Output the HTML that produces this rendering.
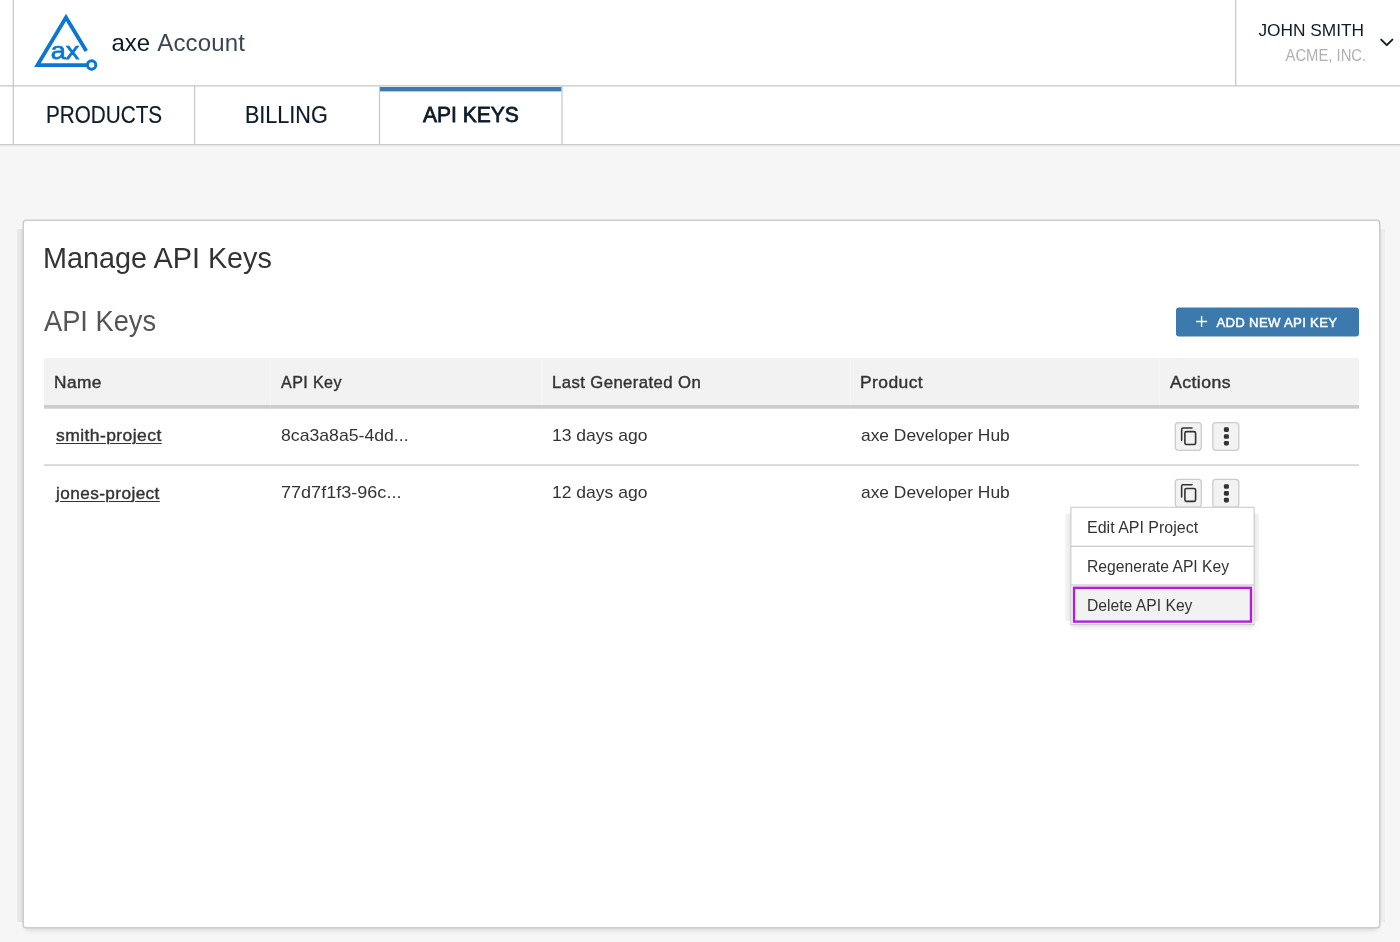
<!DOCTYPE html>
<html lang="en">
<head>
<meta charset="utf-8">
<title>axe Account - API Keys</title>
<style>
*{box-sizing:border-box;margin:0;padding:0}
html,body{width:1400px;height:942px;overflow:hidden}
html{background:#f6f6f6}
body{font-family:"Liberation Sans",Arial,sans-serif;color:#333;position:relative;will-change:transform}
.abs{position:absolute}
.t{position:absolute;white-space:nowrap;transform-origin:0 50%}
.white{left:0;top:0;width:1400px;height:145px;background:#fff}
.brand{left:111.4px;top:28.5px;font-size:24px;line-height:28px;color:#0d1b2a}
.user1{right:36px;top:20px;font-size:17.3px;line-height:20px;color:#0d1b2a;transform-origin:100% 50%}
.user2{right:34px;top:46px;font-size:16px;line-height:20px;color:#b0b0b0;transform-origin:100% 50%}
.tab{top:100px;font-size:23px;line-height:30px;color:#0d1b2a;-webkit-text-stroke:.2px #0d1b2a}
.tab.act{font-weight:400;font-size:22px;-webkit-text-stroke:.8px #0d1b2a}
.strip{left:17px;top:229px;width:1368px;height:693px;background:linear-gradient(90deg,#ececec 0,#e2e2e2 5px,#e2e2e2 1362px,#ececec 1364px,#efefef 100%)}
.panel{left:24px;top:221px;width:1355px;height:706px;background:#fff;border-radius:2px;box-shadow:0 0 0 1.5px #ccc,0 5px 5px -2px rgba(0,0,0,.14)}
h1{left:43px;top:240px;font-size:29px;line-height:36px;font-weight:400;color:#333}
h2{left:44px;top:303px;font-size:29px;line-height:36px;font-weight:400;color:#555}
.btn{left:1176px;top:307.5px;width:183px;height:29px;background:#3c7aae;border-radius:3px}
.btnt{left:1216.4px;top:312.7px;color:#fff;font-size:13.2px;letter-spacing:.3px;font-weight:400;-webkit-text-stroke:.45px #fff;line-height:20px}
.thead{left:44px;top:358px;width:1315px;height:47px;background:#f2f2f2}
.th{top:372.8px;font-size:16.8px;font-weight:400;-webkit-text-stroke:.4px #333;letter-spacing:.4px;line-height:20px;color:#333}
.td{font-size:17px;line-height:20px;color:#333}
.link{font-weight:400;font-size:16.6px;-webkit-text-stroke:.4px #333;letter-spacing:.4px;text-decoration:underline;text-decoration-thickness:1.3px;text-underline-offset:1.5px}
.menu{left:1071px;top:508px;width:183px;height:116px;background:#fff;box-shadow:0 4px 4px 0 rgba(0,0,0,.10)}
.mstrip{left:1065px;top:514px;width:194px;height:107px;background:linear-gradient(90deg,#f4f4f4 0,#efefef 5px,#efefef 190px,#f4f4f4 100%)}
.mi{left:1087px;font-size:16px;line-height:20px;color:#333}
</style>
</head>
<body>
<div class="abs white"></div>
<svg class="abs" style="left:30px;top:8px" width="72" height="68" viewBox="30 8 72 68">
 <path d="M86.3 51.05 L66 17.5 L37.46 65.1 L87.4 65.1" fill="none" stroke="#0b77d2" stroke-width="3.8" stroke-linejoin="miter" stroke-miterlimit="10"/>
 <circle cx="91.6" cy="65" r="4.2" fill="#fff" stroke="#0b77d2" stroke-width="3"/>
 <text x="50.8" y="59.3" font-family="Liberation Sans, Arial, sans-serif" font-weight="400" font-size="23.4" textLength="28.6" lengthAdjust="spacingAndGlyphs" fill="#0b77d2" stroke="#0b77d2" stroke-width="0.75">ax</text>
</svg>
<div class="t brand">axe <span style="color:#3b4652;letter-spacing:.12px;margin-left:.6px">Account</span></div>
<div class="t user1">JOHN SMITH</div>
<div class="t user2" style="transform:scaleX(.925)">ACME, INC.</div>
<svg class="abs" style="left:1378px;top:36px" width="18" height="14" viewBox="0 0 18 14"><path d="M3.2 3.6 L8.8 9.2 L14.4 3.6" fill="none" stroke="#0d1b2a" stroke-width="1.9" stroke-linecap="round" stroke-linejoin="round"/></svg>

<div class="t tab" style="left:46.3px;transform:scaleX(0.9)">PRODUCTS</div>
<div class="t tab" style="left:245.2px;transform:scaleX(0.937)">BILLING</div>
<div class="t tab act" style="left:422.6px;transform:scaleX(0.955)">API KEYS</div>

<div class="abs strip"></div>
<div class="abs panel"></div>
<h1 class="t" style="transform:scaleX(.993)">Manage API Keys</h1>
<h2 class="t" style="transform:scaleX(.94)">API Keys</h2>
<svg class="abs" style="left:1170px;top:300px" width="200" height="45" viewBox="1170 300 200 45"><rect x="1176" y="307.4" width="183" height="29" rx="3" fill="#3c7aae"/></svg>
<div class="t btnt" style="transform:scaleX(1)">ADD NEW API KEY</div>

<div class="abs thead"></div>
<div class="t th" style="left:54px;transform:scaleX(1.03)">Name</div>
<div class="t th" style="left:281px;transform:scaleX(0.96)">API Key</div>
<div class="t th" style="left:552px;transform:scaleX(0.997)">Last Generated On</div>
<div class="t th" style="left:860px;transform:scaleX(1.04)">Product</div>
<div class="t th" style="left:1169.6px;transform:scaleX(1.053)">Actions</div>

<div class="t td link" style="left:56.2px;top:426.2px;transform:scaleX(1.055)">smith-project</div>
<div class="t td" style="left:281px;top:425.5px;transform:scaleX(1.038)">8ca3a8a5-4dd...</div>
<div class="t td" style="left:552px;top:425.5px;transform:scaleX(1.03)">13 days ago</div>
<div class="t td" style="left:860.5px;top:425.5px;transform:scaleX(1.022)">axe Developer Hub</div>
<div class="t td link" style="left:56.2px;top:483.6px;transform:scaleX(1.036)">jones-project</div>
<div class="t td" style="left:281px;top:482.5px;transform:scaleX(1.062)">77d7f1f3-96c...</div>
<div class="t td" style="left:552px;top:482.5px;transform:scaleX(1.03)">12 days ago</div>
<div class="t td" style="left:860.5px;top:482.5px;transform:scaleX(1.022)">axe Developer Hub</div>

<!-- lines, bars and icons -->
<svg class="abs" style="left:0;top:0" width="1400" height="942" viewBox="0 0 1400 942">
 <g fill="#ccc">
  <rect x="0" y="85.15" width="1400" height="1.4"/>
  <rect x="0" y="144" width="1400" height="1.4"/>
  <rect x="0" y="145.4" width="1400" height="0.8" fill="#e4e4e4"/>
  <rect x="12.6" y="0" width="1.4" height="144"/>
  <rect x="1235" y="0" width="1.4" height="85.5"/>
  <rect x="193.9" y="86" width="1.4" height="58.5"/>
  <rect x="378.8" y="86" width="1.4" height="58.5"/>
  <rect x="561.3" y="86" width="1.4" height="58.5"/>
  <rect x="44" y="405" width="1315" height="3.7"/>
  <rect x="44" y="464.4" width="1315" height="1.4"/>
 </g>
 <rect x="380" y="87" width="181.3" height="4.4" fill="#3c7aae"/>
 <rect x="269.9" y="358" width="1" height="47" fill="#f6f6f6"/><rect x="269.9" y="405" width="1" height="3.7" fill="#d2d2d2"/>
 <rect x="541.5" y="358" width="1" height="47" fill="#f6f6f6"/><rect x="541.5" y="405" width="1" height="3.7" fill="#d2d2d2"/>
 <rect x="849.8" y="358" width="1" height="47" fill="#f6f6f6"/><rect x="849.8" y="405" width="1" height="3.7" fill="#d2d2d2"/>
 <rect x="1158.8" y="358" width="1" height="47" fill="#f6f6f6"/><rect x="1158.8" y="405" width="1" height="3.7" fill="#d2d2d2"/>
 <path d="M1201.6 316v11.1M1196 321.55h11.1" stroke="#fff" stroke-width="1.4" fill="none"/>
 <defs>
  <g id="ibtn"><rect x="0.6" y="0.65" width="26" height="27.8" rx="3" fill="#f2f2f2" stroke="#ccc" stroke-width="1.3"/></g>
  <g id="copy"><use href="#ibtn"/>
   <path d="M6.95 18.3V7.3a1.3 1.3 0 0 1 1.3 -1.3H17.3" fill="none" stroke="#333" stroke-width="1.55" stroke-linecap="round"/>
   <rect x="10.2" y="9.7" width="10.7" height="12.9" rx="1.6" fill="none" stroke="#333" stroke-width="1.6"/></g>
  <g id="dots"><use href="#ibtn"/>
   <rect x="11.7" y="5.4" width="5" height="4.6" rx="1.4" fill="#333"/>
   <rect x="11.7" y="12.3" width="5" height="4.6" rx="1.4" fill="#333"/>
   <rect x="11.7" y="19" width="5" height="4.6" rx="1.4" fill="#333"/></g>
 </defs>
 <use href="#copy" x="1174.7" y="421.9"/>
 <use href="#dots" x="1212.2" y="421.9"/>
 <use href="#copy" x="1174.7" y="478.8"/>
 <use href="#dots" x="1212.2" y="478.8"/>
</svg>

<div class="abs mstrip"></div>
<div class="abs menu"></div>
<svg class="abs" style="left:1060px;top:500px" width="210" height="135" viewBox="1060 500 210 135">
 <rect x="1070.9" y="507.3" width="183.2" height="117.3" fill="#fff" stroke="#ccc" stroke-width="1.1"/>
 <rect x="1074" y="588" width="177" height="34" fill="#f2f2f2"/>
 <rect x="1071" y="545.7" width="183" height="1.3" fill="#ccc"/>
 <rect x="1071" y="584.4" width="183" height="1.3" fill="#ccc"/>
 <rect x="1074" y="587.8" width="177" height="33.8" fill="none" stroke="#b31fd9" stroke-width="2.4"/>
</svg>
<div class="t mi" style="top:518px">Edit API Project</div>
<div class="t mi" style="top:556.7px;transform:scaleX(.98)">Regenerate API Key</div>
<div class="t mi" style="top:596px;transform:scaleX(.98)">Delete API Key</div>
</body>
</html>
